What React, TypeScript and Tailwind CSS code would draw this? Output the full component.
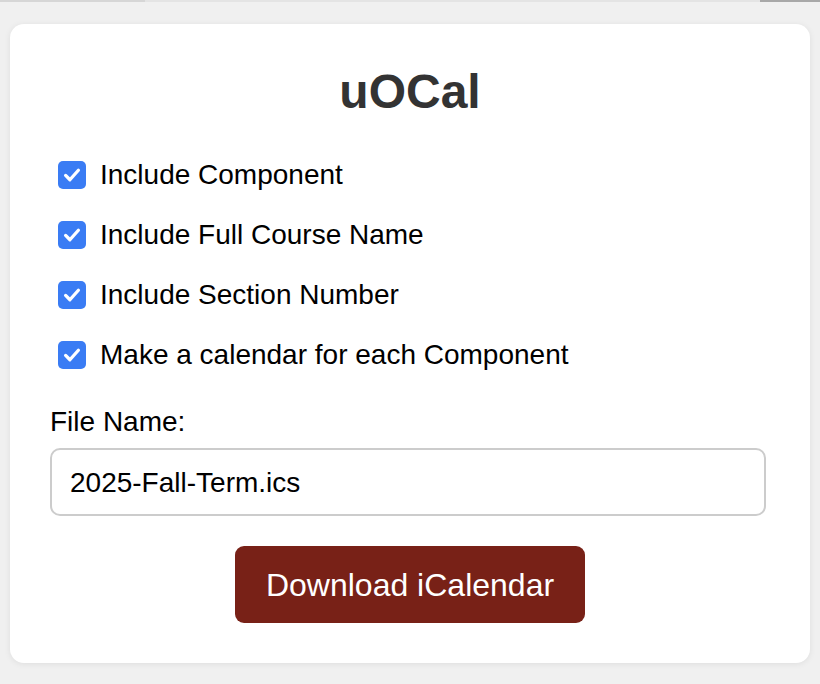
const options = [
    "Include Component",
    "Include Full Course Name",
    "Include Section Number",
    "Make a calendar for each Component",
];

const CheckBox = () => (
    <div className="size-7 ml-2 mr-[14px] shrink-0 rounded-[5px] bg-[#3a7cf4] flex items-center justify-center">
        <svg width="22" height="22" viewBox="0 0 20 20" fill="none">
            <path d="M4.2 10.4l3.9 3.9 7.7-8.6" stroke="white" strokeWidth="3" strokeLinecap="round" strokeLinejoin="round" />
        </svg>
    </div>
);

const App = () => {
    return (
        <div className="w-[820px] h-[684px] bg-[#f0f0f0] overflow-hidden font-['Liberation_Sans',Arial,sans-serif]">
            {/* top strip */}
            <div className="flex h-[2px]">
                <div className="w-[145px] bg-[#d6d6d6]" />
                <div className="flex-1 bg-[#e4e4e4]" />
                <div className="w-[60px] bg-[#a8a8a8]" />
            </div>
            <div className="pt-[22px] px-[10px]">
                <div className="bg-white rounded-[14px] shadow-[0_1px_6px_rgba(0,0,0,0.08)] px-10 pt-10 pb-10">
                    <h1 className="text-[48px] leading-[55px] font-bold text-[#333] text-center">uOCal</h1>
                    <div className="mt-[26px] flex flex-col">
                        {options.map((label) => (
                            <div key={label} className="h-[60px] flex items-center">
                                <CheckBox />
                                <span className="text-[28px] leading-8 text-black">{label}</span>
                            </div>
                        ))}
                    </div>
                    <div className="mt-[21px] text-[28px] leading-8 text-black">File Name:</div>
                    <div className="mt-[10px] w-[716px] h-[68px] border-2 border-[#cccccc] rounded-[10px] flex items-center pl-[18px] pt-[2px]">
                        <span className="text-[28px] text-black">2025-Fall-Term.ics</span>
                    </div>
                    <div className="mt-[30px] flex justify-center">
                        <button className="w-[350px] h-[77px] rounded-[9px] bg-[#782117] text-white text-[32px]">
                            Download iCalendar
                        </button>
                    </div>
                </div>
            </div>
        </div>
    );
};

export default App;
